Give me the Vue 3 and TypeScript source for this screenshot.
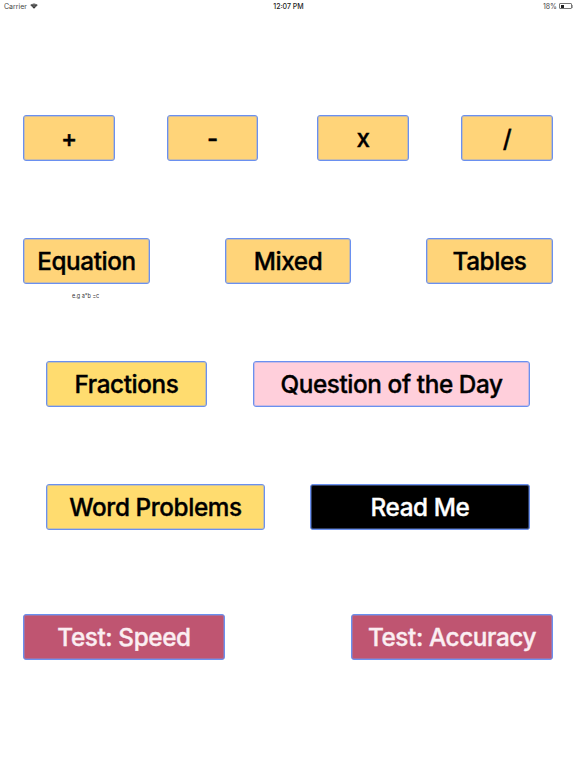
<script setup lang="ts">
interface Btn { label: string; tone: string; }
const ops: Btn[] = ['+', '-', 'x', '/'].map((label) => ({ label, tone: 'peach' }));
const modes: Btn[] = ['Equation', 'Mixed', 'Tables'].map((label) => ({ label, tone: 'peach' }));
</script>

<template>
  <div class="page">
    <header class="status">
      <div class="status-left">
        <span>Carrier</span>
        <svg class="wifi" width="8" height="6" viewBox="0 0 10 8">
          <path d="M5 7.8 L0 2.7 A7.2 7.2 0 0 1 10 2.7 Z" fill="#333" />
          <path d="M1.6 2.9 A5 5 0 0 1 8.4 2.9" fill="none" stroke="#fff" stroke-width="0.5" />
          <path d="M3 4.6 A3 3 0 0 1 7 4.6" fill="none" stroke="#fff" stroke-width="0.5" />
        </svg>
      </div>
      <span class="status-time">12:07 PM</span>
      <div class="status-right">
        <span>18%</span>
        <span class="battery"><span class="battery-fill"></span></span>
        <span class="battery-tip"></span>
      </div>
    </header>

    <main class="board">
      <div class="row row-ops">
        <button v-for="b in ops" :key="b.label" class="btn" :class="b.tone">{{ b.label }}</button>
      </div>
      <div class="row row-modes">
        <button v-for="b in modes" :key="b.label" class="btn" :class="b.tone">{{ b.label }}</button>
      </div>
      <p class="hint">e.g a*b =c</p>
      <div class="row row-third">
        <button class="btn yellow">Fractions</button>
        <button class="btn pink">Question of the Day</button>
      </div>
      <div class="row row-fourth">
        <button class="btn yellow">Word Problems</button>
        <button class="btn black">Read Me</button>
      </div>
      <div class="row row-tests">
        <button class="btn rose">Test: Speed</button>
        <button class="btn rose">Test: Accuracy</button>
      </div>
    </main>
  </div>
</template>

<style>
html, body { background: #fff; }
</style>

<style scoped>
.page {
  width: 576px;
  height: 768px;
  overflow: hidden;
  background: #fff;
  font-family: Inter, "Liberation Sans", sans-serif;
  color: #000;
}
.status {
  height: 12px;
  padding: 0 3px 0 4px;
  display: grid;
  grid-template-columns: 1fr auto 1fr;
  align-items: center;
  font-size: 7px;
  color: #444;
}
.status-left { display: flex; align-items: center; gap: 3px; }
.status-time { font-weight: 500; color: #222; }
.status-right { display: flex; align-items: center; justify-content: flex-end; }
.status-right span:first-child { margin-right: 2px; }
.battery {
  width: 13px;
  height: 6px;
  border: 0.5px solid #777;
  border-radius: 1px;
  padding: 0.5px;
  box-sizing: border-box;
  display: block;
}
.battery-fill { display: block; width: 3px; height: 100%; background: #222; }
.battery-tip { width: 1px; height: 3px; background: #aaa; }
.board {
  padding: 103px 23px 0;
  display: flex;
  flex-direction: column;
}
.row { display: grid; height: 46px; }
.row-ops { display: flex; }
.row-ops .btn { width: 92px; flex: none; }
.row-ops .btn:nth-child(2) { width: 91px; margin-left: 52px; }
.row-ops .btn:nth-child(3) { margin-left: 59px; }
.row-ops .btn:nth-child(4) { margin-left: 52px; }
.row-modes { margin-top: 77px; grid-template-columns: 127px 126px 127px; justify-content: space-between; }
.hint {
  margin: 8px 0 0 49px;
  height: 8px;
  font-size: 5.5px;
  line-height: 8px;
  color: #333;
}
.row-third { margin-top: 61px; margin-left: 23px; margin-right: 23px; grid-template-columns: 161px 277px; justify-content: space-between; }
.row-fourth { margin-top: 77px; margin-left: 23px; margin-right: 23px; grid-template-columns: 219px 220px; justify-content: space-between; }
.row-tests { margin-top: 84px; grid-template-columns: 202px 202px; justify-content: space-between; }
.btn {
  box-sizing: border-box;
  margin: 0;
  padding: 1px 0 0;
  width: 100%;
  height: 46px;
  border: 1px solid #6a90f0;
  box-shadow: inset 0 0 0 1px rgba(120, 155, 240, 0.4);
  border-radius: 3px;
  font: 500 24.3px/1 Inter, "Liberation Sans", sans-serif;
  -webkit-text-stroke: 0.35px currentColor;
  letter-spacing: -0.4px;
  color: #000;
  text-align: center;
}
.peach { background: #ffd479; }
.yellow { background: #ffdc6f; }
.pink { background: #ffcfdb; }
.black { background: #000; color: #fff; }
.rose { background: #bf5571; color: #fbeef2; }
</style>
